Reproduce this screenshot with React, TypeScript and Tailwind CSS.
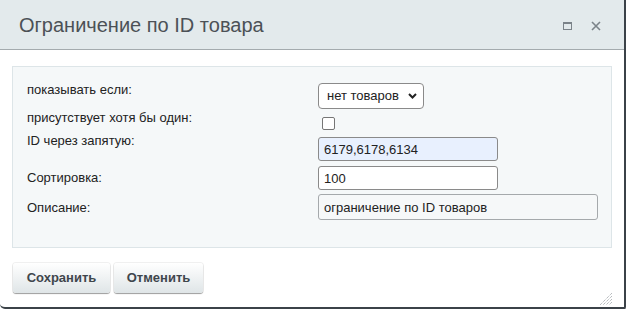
import React from 'react';

const labelCls = "w-[291px] shrink-0 text-[13px] leading-[16px] text-[#222]";
const inputCls = "border border-[#8a8a8a] rounded-[3px] px-[5px] text-[13px] text-[#222] outline-none";

const App: React.FC = () => {
    return (
        <div className="w-[627px] h-[309px] bg-white font-['Liberation_Sans',Arial,sans-serif]">
            <div className="w-[626px] h-[309px] flex flex-col border-r-2 border-b-2 border-[#3b4248] rounded-bl-[5px] rounded-br-[2px] overflow-hidden">
                {/* header */}
                <div className="h-[50px] shrink-0 flex items-center bg-[#e3eaec] border-b border-[#a4abae] pl-[19px] pr-[23px]">
                    <h1 className="flex-1 text-[20px] leading-[26px] text-[#4c5156] pt-[1px]">Ограничение по ID товара</h1>
                    <div className="flex items-center gap-[19px] mt-[2px]">
                        <svg width="9" height="8" viewBox="0 0 9 8" fill="none">
                            <rect x="0.5" y="0.5" width="8" height="7" stroke="#7b8389" />
                            <line x1="0" y1="1.5" x2="9" y2="1.5" stroke="#7b8389" />
                        </svg>
                        <svg width="10" height="10" viewBox="0 0 10 10">
                            <path d="M1 1 L9 9 M9 1 L1 9" stroke="#7b8389" strokeWidth="1.6" />
                        </svg>
                    </div>
                </div>

                {/* body */}
                <div className="flex-1 flex flex-col px-[12px] pt-[16px]">
                    <div className="border border-[#dde5e8] bg-[#f5f8f9] pl-[14px] pt-[15px] pb-[27px]">
                        <div className="flex items-start h-[28px]">
                            <div className={labelCls}>показывать если:</div>
                            <div className="relative mt-[1px]">
                                <select className="appearance-none w-[106px] h-[26px] border border-[#8a8a8a] rounded-[4px] bg-white pl-[8px] text-[13px] text-[#222] outline-none" defaultValue="none">
                                    <option value="none">нет товаров</option>
                                    <option value="any">есть товары</option>
                                </select>
                                <svg className="absolute right-[7px] top-[10px] pointer-events-none" width="9" height="6" viewBox="0 0 9 6">
                                    <path d="M1 1 L4.5 4.5 L8 1" fill="none" stroke="#222" strokeWidth="2" />
                                </svg>
                            </div>
                        </div>
                        <div className="flex items-start h-[22px]">
                            <div className={labelCls}>присутствует хотя бы один:</div>
                            <span className="mt-[7px] ml-[4px] w-[13px] h-[13px] border border-[#767676] rounded-[2px] bg-white" />
                        </div>
                        <div className="flex items-start h-[29px]">
                            <div className={`${labelCls} mt-[1px]`}>ID через запятую:</div>
                            <input className={`${inputCls} mt-[5px] w-[180px] h-[24px] bg-[#e8f0fe]`} defaultValue="6179,6178,6134" />
                        </div>
                        <div className="flex items-start h-[29px]">
                            <div className={`${labelCls} mt-[9px]`}>Сортировка:</div>
                            <input className={`${inputCls} mt-[5px] w-[180px] h-[24px] bg-white`} defaultValue="100" />
                        </div>
                        <div className="flex items-start h-[30px]">
                            <div className={`${labelCls} mt-[10px]`}>Описание:</div>
                            <input className="mt-[4px] w-[280px] h-[26px] border border-[#a5a9ac] rounded-[3px] px-[5px] text-[13px] text-[#222] bg-[#f6f8f9] outline-none" defaultValue="ограничение по ID товаров" />
                        </div>
                    </div>

                    <div className="flex gap-[4px] mt-[15px] pl-[1px]">
                        <button className="w-[97px] h-[30px] rounded-[3px] bg-gradient-to-b from-white to-[#dfe5e7] shadow-[0_1px_1px_rgba(0,0,0,0.35),0_0_0_1px_rgba(0,0,0,0.06)] text-[13px] font-bold text-[#3f464c]">Сохранить</button>
                        <button className="w-[89px] h-[30px] rounded-[3px] bg-gradient-to-b from-white to-[#dfe5e7] shadow-[0_1px_1px_rgba(0,0,0,0.35),0_0_0_1px_rgba(0,0,0,0.06)] text-[13px] font-bold text-[#3f464c]">Отменить</button>
                    </div>

                    <div className="flex-1 flex justify-end items-end pb-[2px]">
                        <svg width="12" height="12" viewBox="0 0 12 12">
                            <path d="M12 0 L0 12 M12 3 L3 12 M12 6 L6 12 M12 9 L9 12" stroke="#9aa0a4" strokeWidth="1" strokeDasharray="1 1" />
                        </svg>
                    </div>
                </div>
            </div>
        </div>
    );
};

export default App;
